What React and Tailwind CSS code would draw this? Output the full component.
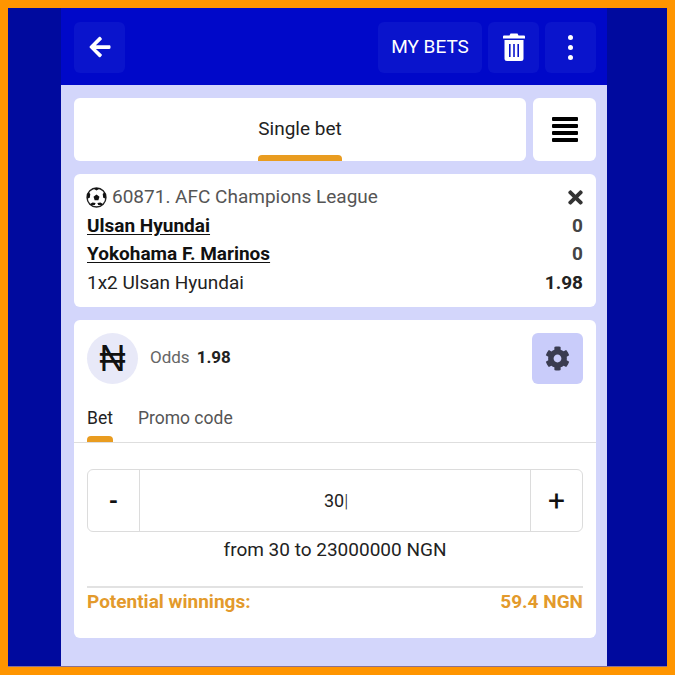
import React from 'react';
import { FaArrowLeft, FaCog, FaTimes } from 'react-icons/fa';

const roboto = { fontFamily: 'Roboto, "Liberation Sans", sans-serif' };

const BallIcon = () => (
  <svg width="21" height="21" viewBox="0 0 24 24" className="shrink-0 -ml-[1px] mt-[1px]">
    <circle cx="12" cy="12" r="10.8" fill="#fff" stroke="#222" strokeWidth="1.6" />
    <path d="M12 8.6l3.4 2.5-1.3 4h-4.2l-1.3-4z" fill="#111" />
    <path d="M8.3 1.8L12 4l3.7-2.2A11 11 0 0 0 8.3 1.8zM1.4 13.5l2.9-1.2.6-4.3-2.2-2.4a11 11 0 0 0-1.3 7.9zM22.6 13.5l-2.9-1.2-.6-4.3 2.2-2.4a11 11 0 0 1 1.3 7.9zM6 20.8l4-.2 1-2.4-3.5-.6-2.9 1.9zM18 20.8l-4-.2-1-2.4 3.5-.6 2.9 1.9z" fill="#111" />
  </svg>
);

const TrashIcon = () => (
  <svg width="22" height="28" viewBox="0 0 22 28" fill="#fff">
    <path d="M7.5 0.5h7l1 2H21a1 1 0 0 1 1 1v2H0v-2a1 1 0 0 1 1-1h5.5z" />
    <path fillRule="evenodd" d="M1.5 7h19v18.5a2.5 2.5 0 0 1-2.5 2.5H4a2.5 2.5 0 0 1-2.5-2.5zM6 11v13h1.6V11zM10.2 11v13h1.6V11zM14.4 11v13H16V11z" />
  </svg>
);

const App = () => {
  return (
    <div className="w-[675px] h-[675px] bg-[#ff9500] p-2 overflow-hidden" style={roboto}>
      <div className="h-full bg-[#000a9e] pl-[53px] border-b border-[#8a7090]">
        <div className="w-[546px] h-full flex flex-col bg-[#d3d6fb]">

          {/* HEADER */}
          <div className="h-[77px] shrink-0 bg-[#0008c9] flex items-center justify-between pl-[13px] pr-[11px] pt-[1px]">
            <button className="w-[51px] h-[51px] rounded-md bg-[#0a14cc] flex items-center justify-center text-white">
              <FaArrowLeft size={24} />
            </button>
            <div className="flex gap-[6px]">
              <button className="w-[104px] h-[51px] rounded-md bg-[#0a14cc] text-white text-[19px]">MY BETS</button>
              <button className="w-[51px] h-[51px] rounded-md bg-[#0a14cc] flex items-center justify-center text-white">
                <TrashIcon />
              </button>
              <button className="w-[51px] h-[51px] rounded-md bg-[#0a14cc] flex flex-col gap-[5px] items-center justify-center">
                <span className="w-[5px] h-[5px] rounded-full bg-white"></span>
                <span className="w-[5px] h-[5px] rounded-full bg-white"></span>
                <span className="w-[5px] h-[5px] rounded-full bg-white"></span>
              </button>
            </div>
          </div>

          <div className="flex flex-col gap-[13px] pl-[13px] pr-[11px] pt-[13px]">
            {/* BET TYPE TABS */}
            <div className="flex gap-[7px] h-[63px]">
              <div className="flex-1 bg-white rounded-md relative flex items-center justify-center text-[19px] text-[#222]">
                Single bet
                <div className="absolute bottom-0 left-[184px] w-[84px] h-[6px] rounded-t bg-[#e99c20]"></div>
              </div>
              <div className="w-[63px] bg-white rounded-md flex items-center justify-center">
                <div className="w-[26px] flex flex-col gap-[3px]">
                  <div className="h-[4px] bg-black rounded-[1px]"></div>
                  <div className="h-[4px] bg-black rounded-[1px]"></div>
                  <div className="h-[4px] bg-black rounded-[1px]"></div>
                  <div className="h-[4px] bg-black rounded-[1px]"></div>
                </div>
              </div>
            </div>

            {/* SELECTED EVENT */}
            <div className="h-[133px] bg-white rounded-md px-[13px] pt-[9px] text-[19px] leading-[28.5px] text-[#222]">
              <div className="flex justify-between items-center">
                <div className="flex items-center gap-[5px] text-[#555]">
                  <BallIcon />
                  60871. AFC Champions League
                </div>
                <FaTimes size={21} className="text-[#333] -mr-[3px]" />
              </div>
              <div className="flex justify-between font-bold">
                <span className="text-[#111] underline underline-offset-2">Ulsan Hyundai</span>
                <span className="text-[#444]">0</span>
              </div>
              <div className="flex justify-between font-bold">
                <span className="text-[#111] underline underline-offset-2">Yokohama F. Marinos</span>
                <span className="text-[#444]">0</span>
              </div>
              <div className="flex justify-between">
                <span>1x2 Ulsan Hyundai</span>
                <span className="font-bold">1.98</span>
              </div>
            </div>

            {/* STAKE */}
            <div className="h-[318px] bg-white rounded-md">
              <div className="flex items-center justify-between px-[13px] pt-[13px]">
                <div className="flex items-center">
                  <div className="w-[51px] h-[51px] rounded-full bg-[#e8e9f8] flex items-center justify-center text-[36px] font-normal font-['Liberation_Sans'] text-[#111]">₦</div>
                  <span className="ml-[12px] text-[17px] text-[#666] -mt-[2px]">Odds</span>
                  <span className="ml-[7px] text-[17px] font-bold text-[#222] -mt-[2px]">1.98</span>
                </div>
                <button className="w-[51px] h-[51px] rounded-md bg-[#c9ccfa] flex items-center justify-center text-[#3a3c50]">
                  <FaCog size={25} />
                </button>
              </div>

              <div className="flex gap-[25px] px-[13px] mt-[22px] h-[37px] border-b border-[#dedede] text-[17.5px] leading-[24px] text-[#555]">
                <div className="relative text-[#222]">
                  Bet
                  <div className="absolute bottom-0 left-0 w-full h-[6px] rounded-t bg-[#e99c20]"></div>
                </div>
                <div>Promo code</div>
              </div>

              <div className="mx-[13px] mt-[26px] h-[63px] border border-[#dcdcdc] rounded-md flex items-center text-[#222]">
                <div className="w-[52px] h-full flex items-center justify-center border-r border-[#dcdcdc] text-[24px] font-bold text-[#111]">-</div>
                <div className="flex-1 text-center text-[18px] pl-[2px]">30<span className="font-light">|</span></div>
                <div className="w-[52px] h-full flex items-center justify-center border-l border-[#dcdcdc] text-[30px] text-[#111]">+</div>
              </div>

              <div className="mt-[4px] text-center text-[19px] leading-[28px] text-[#222]">from 30 to 23000000 NGN</div>

              <div className="mx-[13px] mt-[22px] border-t-2 border-[#e2e2e2] flex justify-between text-[19px] font-bold text-[#e39a2c] leading-[27px]">
                <span>Potential winnings:</span>
                <span>59.4 NGN</span>
              </div>
            </div>
          </div>
        </div>
      </div>
    </div>
  );
};

export default App;
